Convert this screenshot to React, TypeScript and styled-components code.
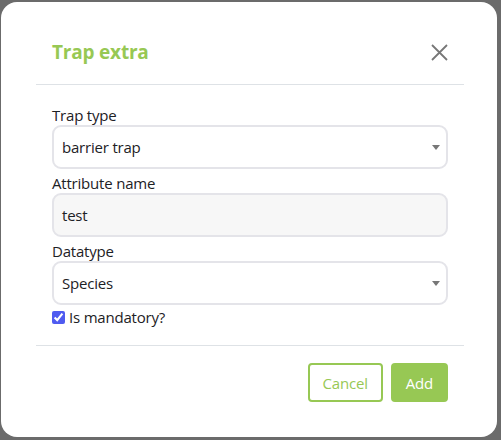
import styled, { createGlobalStyle } from 'styled-components'

const GlobalStyle = createGlobalStyle`
  html, body {
    margin: 0;
    padding: 0;
    background: #6b6b6b;
  }
  body {
    font-family: "Open Sans", "Noto Sans", sans-serif;
    color: #212529;
  }
`

const green = '#97c854'

const Backdrop = styled.div`
  width: 501px;
  height: 440px;
  padding: 2px 0 0 1px;
  box-sizing: border-box;
`

const Modal = styled.div`
  width: 496px;
  height: 435px;
  background: #fff;
  border-radius: 16px;
  padding: 0 33px 0 35px;
  box-sizing: border-box;
  display: flex;
  flex-direction: column;
`

const Header = styled.header`
  display: flex;
  align-items: center;
  justify-content: space-between;
  padding: 38px 16px 20px;
  border-bottom: 1px solid #dee2e6;
`

const Title = styled.h5`
  margin: 0;
  font-size: 19px;
  line-height: 24px;
  font-weight: 700;
  color: ${green};
  letter-spacing: -0.2px;
`

const CloseButton = styled.button`
  border: 0;
  background: none;
  padding: 0;
  width: 17px;
  height: 17px;
  display: flex;
  cursor: pointer;
`

const Body = styled.div`
  padding: 16px 16px 18px;
  border-bottom: 1px solid #dee2e6;
`

const Label = styled.label`
  display: block;
  margin-top: 4px;
  font-size: 15px;
  line-height: 20px;
  color: #1d2125;
  letter-spacing: -0.2px;
`

const Field = styled.div<{ $filled?: boolean }>`
  position: relative;
  height: 44px;
  box-sizing: border-box;
  border: 2px solid #e4e4e9;
  border-radius: 9px;
  background: ${p => (p.$filled ? '#f7f7f7' : '#fff')};
  display: flex;
  align-items: center;
  padding: 0 8px;
  font-size: 15px;
  color: #1d2125;
  letter-spacing: -0.2px;
`

const Caret = styled.span`
  position: absolute;
  right: 6px;
  top: 50%;
  margin-top: -2px;
  width: 0;
  height: 0;
  border-left: 4px solid transparent;
  border-right: 4px solid transparent;
  border-top: 5px solid #777;
`

const CheckRow = styled.label`
  display: flex;
  align-items: center;
  gap: 4px;
  margin-top: 2px;
  font-size: 15px;
  line-height: 20px;
  color: #1d2125;
  letter-spacing: -0.2px;
`

const CheckBox = styled.input`
  margin: 0;
  width: 13px;
  height: 13px;
  accent-color: #4f5bf0;
`

const Footer = styled.footer`
  display: flex;
  justify-content: flex-end;
  gap: 8px;
  padding: 17px 16px 0;
`

const Button = styled.button<{ $solid?: boolean }>`
  height: 39px;
  box-sizing: border-box;
  padding: 0 13px;
  border: 2px solid ${green};
  border-radius: 4px;
  background: ${p => (p.$solid ? green : '#fff')};
  color: ${p => (p.$solid ? '#fff' : green)};
  font-family: inherit;
  font-size: 15px;
  letter-spacing: -0.2px;
  cursor: pointer;
`

function SelectBox({ value }: { value: string }) {
  return (
    <Field>
      {value}
      <Caret />
    </Field>
  )
}

export default function App() {
  return (
    <Backdrop>
      <GlobalStyle />
      <Modal>
        <Header>
          <Title>Trap extra</Title>
          <CloseButton aria-label="Close">
            <svg width="17" height="17" viewBox="0 0 17 17">
              <path d="M1 1L16 16M16 1L1 16" stroke="#777" strokeWidth="1.8" />
            </svg>
          </CloseButton>
        </Header>
        <Body>
          <Label>Trap type</Label>
          <SelectBox value="barrier trap" />
          <Label>Attribute name</Label>
          <Field $filled>test</Field>
          <Label>Datatype</Label>
          <SelectBox value="Species" />
          <CheckRow>
            <CheckBox type="checkbox" defaultChecked />
            Is mandatory?
          </CheckRow>
        </Body>
        <Footer>
          <Button>Cancel</Button>
          <Button $solid>Add</Button>
        </Footer>
      </Modal>
    </Backdrop>
  )
}
